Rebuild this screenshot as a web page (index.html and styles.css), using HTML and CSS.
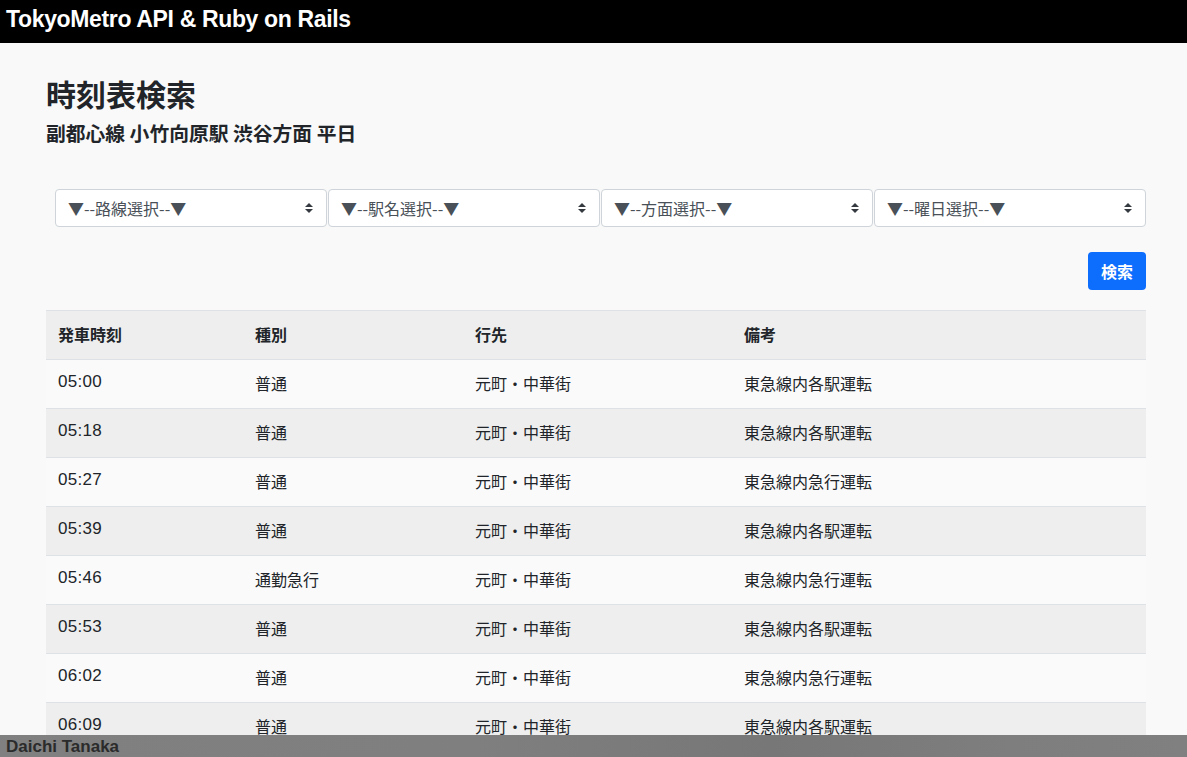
FILE: index.html
```html
<!DOCTYPE html>
<html lang="ja">
<head>
<meta charset="utf-8">
<title>TokyoMetro API & Ruby on Rails</title>
<link rel="stylesheet" href="styles.css">
</head>
<body>
<header class="topbar">TokyoMetro API &amp; Ruby on Rails</header>
<main class="container">
  <h1 class="title">時刻表検索</h1>
  <h2 class="subtitle">副都心線 小竹向原駅 渋谷方面 平日</h2>
  <form class="search">
    <div class="selects">
      <select class="sel"><option>▼--路線選択--▼</option></select>
      <select class="sel"><option>▼--駅名選択--▼</option></select>
      <select class="sel"><option>▼--方面選択--▼</option></select>
      <select class="sel"><option>▼--曜日選択--▼</option></select>
    </div>
    <div class="actions"><button type="button" class="btn">検索</button></div>
  </form>
  <table class="timetable">
    <colgroup><col class="c1"><col class="c2"><col class="c3"><col class="c4"></colgroup>
    <thead><tr><th>発車時刻</th><th>種別</th><th>行先</th><th>備考</th></tr></thead>
    <tbody>
      <tr><td class="time">05:00</td><td>普通</td><td>元町・中華街</td><td>東急線内各駅運転</td></tr>
      <tr><td class="time">05:18</td><td>普通</td><td>元町・中華街</td><td>東急線内各駅運転</td></tr>
      <tr><td class="time">05:27</td><td>普通</td><td>元町・中華街</td><td>東急線内急行運転</td></tr>
      <tr><td class="time">05:39</td><td>普通</td><td>元町・中華街</td><td>東急線内各駅運転</td></tr>
      <tr><td class="time">05:46</td><td>通勤急行</td><td>元町・中華街</td><td>東急線内急行運転</td></tr>
      <tr><td class="time">05:53</td><td>普通</td><td>元町・中華街</td><td>東急線内各駅運転</td></tr>
      <tr><td class="time">06:02</td><td>普通</td><td>元町・中華街</td><td>東急線内急行運転</td></tr>
      <tr><td class="time">06:09</td><td>普通</td><td>元町・中華街</td><td>東急線内各駅運転</td></tr>
    </tbody>
  </table>
</main>
<footer class="footer">Daichi Tanaka</footer>
</body>
</html>
```
FILE: styles.css
```css
html, body { margin: 0; padding: 0; }
body {
  background: #f9f9f9;
  color: #212529;
  font-family: "Liberation Sans", "Noto Sans CJK JP", sans-serif;
  font-size: 16px;
  overflow: hidden;
  height: 757px;
}
.topbar {
  background: #000;
  color: #fff;
  height: 43px;
  box-sizing: border-box;
  padding: 6px 0 0 6px;
  font-size: 23px;
  font-weight: 700;
  line-height: 27px;
  letter-spacing: -0.35px;
}
.container {
  width: 1100px;
  padding-left: 46px;
}
.title {
  margin: 32px 0 0;
  font-family: "Noto Sans CJK JP", sans-serif;
  font-size: 30px;
  line-height: 36px;
  font-weight: 700;
}
.subtitle {
  margin: 8px 0 0;
  font-family: "Noto Sans CJK JP", sans-serif;
  font-size: 19.8px;
  line-height: 28px;
  font-weight: 700;
}
.search { margin-top: 42px; }
.selects {
  display: flex;
  gap: 1px;
  padding-left: 9px;
}
.sel {
  flex: 1;
  height: 38px;
  border: 1px solid #ced4da;
  border-radius: 4px;
  background: #fff url("data:image/svg+xml;utf8,<svg xmlns='http://www.w3.org/2000/svg' width='8' height='10' viewBox='0 0 8 10'><path d='M4 0 L8 4 H0 Z M4 10 L0 6 H8 Z' fill='%23343a40'/></svg>") no-repeat right 13px center / 8px 10px;
  -webkit-appearance: none;
  appearance: none;
  padding: 0 12px;
  font-family: "Noto Sans CJK JP", sans-serif;
  font-size: 16px;
  color: #495057;
}
.actions {
  display: flex;
  justify-content: flex-end;
  margin-top: 25px;
}
.btn {
  background: #0d6efd;
  color: #fff;
  border: none;
  border-radius: 4px;
  width: 58px;
  height: 38px;
  font-family: "Noto Sans CJK JP", sans-serif;
  font-size: 16px;
  font-weight: 700;
  padding: 0;
}
.timetable {
  margin-top: 20px;
  width: 1100px;
  border-collapse: collapse;
  font-family: "Noto Sans CJK JP", sans-serif;
}
.c1 { width: 197px; }
.c2 { width: 220px; }
.c3 { width: 269px; }
.c4 { width: 414px; }
.timetable th, .timetable td {
  padding: 12px 12px 14px;
  line-height: 22px;
  text-align: left;
  border-top: 1px solid #dee2e6;
  font-size: 16px;
  vertical-align: middle;
}
.timetable th { font-weight: 700; padding-top: 12px; padding-bottom: 14px; background: #eee; }
.timetable td.time {
  padding-top: 11px;
  padding-bottom: 15px;
  font-family: "Liberation Sans", sans-serif;
  font-size: 17px;
  letter-spacing: 0.3px;
}
.timetable tbody tr:nth-child(odd) { background: #fafafa; }
.timetable tbody tr:nth-child(even) { background: #eee; }
.footer {
  position: fixed;
  left: 0;
  right: 0;
  bottom: 0;
  height: 22px;
  background: linear-gradient(90deg, #808080 0%, #7f7f7f 40%, #777 65%, #7e7e7e 85%, #808080 100%);
  color: #2b2b2b;
  font-weight: 700;
  font-size: 17px;
  line-height: 23px;
  padding-left: 6px;
}
```
